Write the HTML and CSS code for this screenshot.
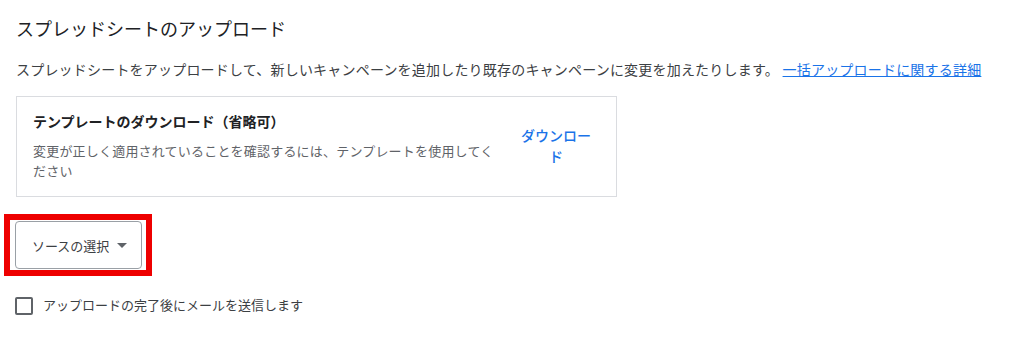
FILE: index.html
```html
<!DOCTYPE html>
<html lang="ja">
<head>
<meta charset="utf-8">
<title>スプレッドシートのアップロード</title>
<link rel="stylesheet" href="styles.css">
</head>
<body>
<main class="page">
  <h1 class="title">スプレッドシートのアップロード</h1>
  <p class="intro">スプレッドシートをアップロードして、新しいキャンペーンを追加したり既存のキャンペーンに変更を加えたりします。 <a class="link" href="#">一括アップロードに関する詳細</a></p>

  <section class="card">
    <div class="card-body">
      <div class="card-title">テンプレートのダウンロード（省略可）</div>
      <div class="card-desc">変更が正しく適用されていることを確認するには、テンプレートを使用してください</div>
    </div>
    <a class="card-action" href="#">ダウンロード</a>
  </section>

  <div class="highlight">
    <button class="select-btn" type="button">
      <span>ソースの選択</span>
      <span class="caret"></span>
    </button>
  </div>

  <label class="check-row">
    <span class="checkbox"></span>
    <span class="check-label">アップロードの完了後にメールを送信します</span>
  </label>
</main>
</body>
</html>
```

FILE: styles.css
```css
* { box-sizing: border-box; }

html, body {
  margin: 0;
  padding: 0;
  background: #ffffff;
}

body {
  font-family: Roboto, "Noto Sans CJK JP", "Noto Sans", sans-serif;
  color: #3c4043;
  width: 1024px;
  height: 358px;
  overflow: hidden;
}

.page {
  padding: 18px 16px 0 16px;
}

.title {
  margin: 0;
  font-size: 18px;
  line-height: 24px;
  font-weight: 400;
  color: #202124;
}

.intro {
  margin: 18px 0 0 0;
  font-size: 14px;
  line-height: 20px;
  letter-spacing: 0.2px;
  color: #3c4043;
}

.link {
  color: #1a73e8;
  text-decoration: underline;
}

.card {
  margin-top: 16px;
  width: 601px;
  border: 1px solid #dadce0;
  padding: 15px 17px 14px 16px;
  display: flex;
  align-items: center;
  gap: 13px;
}

.card-body {
  flex: 1;
  min-width: 0;
}

.card-title {
  font-size: 14px;
  line-height: 20px;
  font-weight: 700;
  color: #202124;
}

.card-desc {
  margin-top: 10px;
  font-size: 13px;
  line-height: 20px;
  letter-spacing: 0.2px;
  color: #5f6368;
}

.card-action {
  flex: 0 0 86px;
  padding: 0 7px;
  text-align: center;
  font-size: 14px;
  line-height: 21px;
  font-weight: 500;
  color: #1a73e8;
  text-decoration: none;
}

.highlight {
  display: inline-block;
  margin: 17px 0 0 -12px;
  border: 6px solid #ee0000;
  padding: 1px 4px 1px 5px;
}

.select-btn {
  display: flex;
  align-items: center;
  gap: 8px;
  width: 127px;
  height: 48px;
  padding: 0 12px 0 16px;
  background: #ffffff;
  border: 1px solid #9aa0a6;
  border-radius: 4px;
  font-family: inherit;
  font-size: 13px;
  color: #3c4043;
}

.caret {
  width: 0;
  height: 0;
  border-left: 5px solid transparent;
  border-right: 5px solid transparent;
  border-top: 5px solid #5f6368;
}

.check-row {
  margin-top: 21px;
  margin-left: -1px;
  display: flex;
  align-items: center;
  gap: 10px;
}

.checkbox {
  width: 18px;
  height: 18px;
  border: 2px solid #5f6368;
  border-radius: 2px;
  flex: 0 0 18px;
}

.check-label {
  font-size: 13px;
  line-height: 18px;
  color: #3c4043;
}
```
